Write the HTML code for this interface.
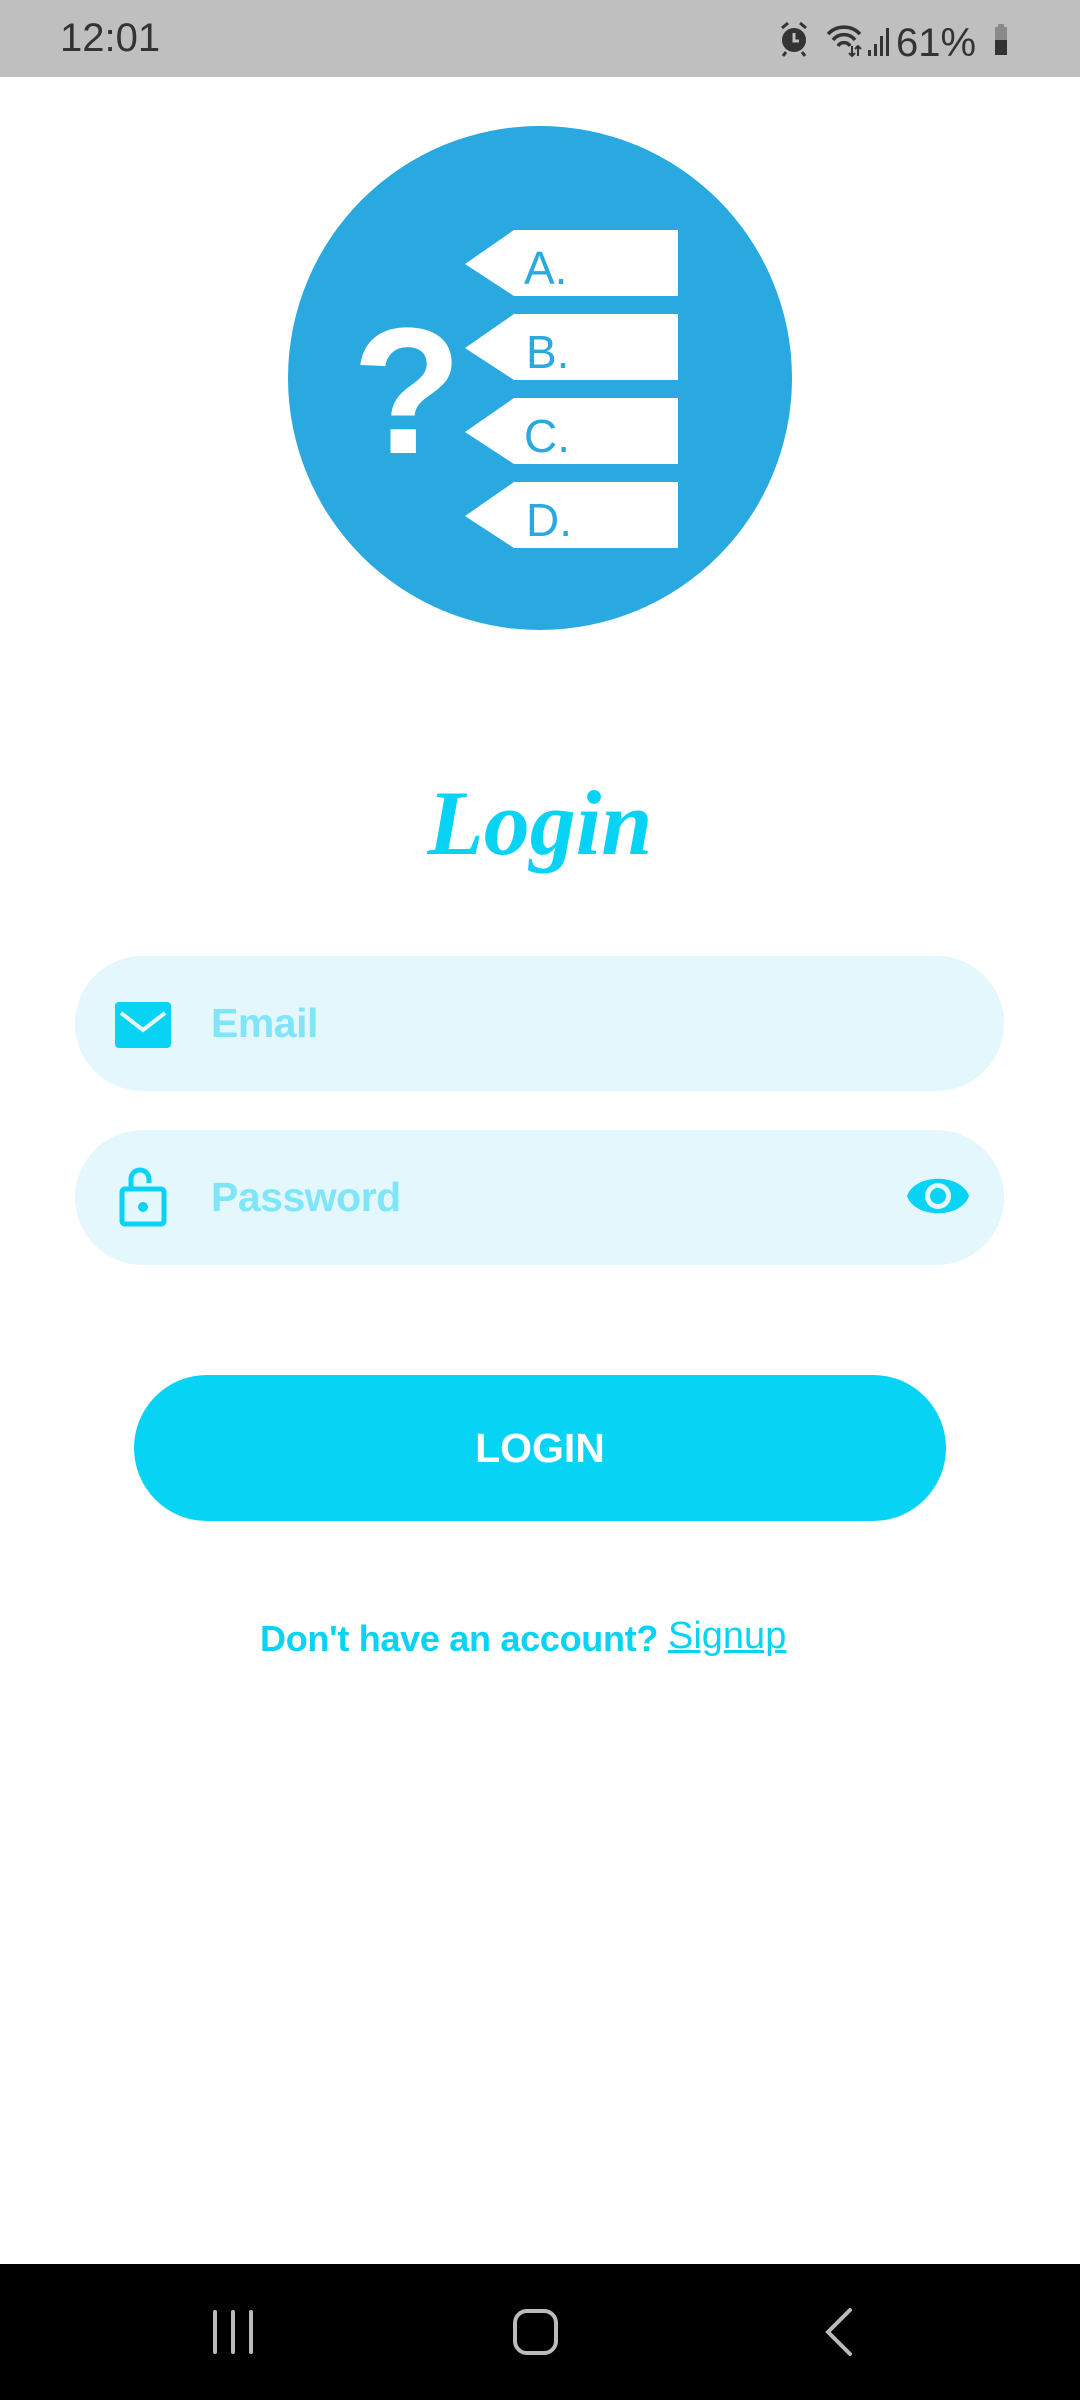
<!DOCTYPE html>
<html><head><meta charset="utf-8"><style>
*{margin:0;padding:0;box-sizing:border-box}
body{width:1080px;height:2400px;background:#fff;position:relative;overflow:hidden;font-family:"Liberation Sans",sans-serif}
.abs{position:absolute}
.sb{left:0;top:0;width:1080px;height:77px;background:#bfbfbf}
.field{left:75px;width:929px;height:135px;border-radius:68px;background:#e3f7fc}
.ph{font-size:41px;font-weight:bold;color:#7ee6f8;left:136px;letter-spacing:-0.5px}
</style></head><body>
<div class="abs sb">
  <div class="abs" style="left:60px;top:16px;font-size:40px;color:#333">12:01</div>
  <svg class="abs" style="left:778px;top:20px" width="260" height="40" viewBox="0 0 260 40">
    <circle cx="16" cy="20" r="12" fill="#333"/><path d="M16 13v8h5" stroke="#bfbfbf" stroke-width="3" fill="none"/>
    <path d="M4 8l6-5M28 8l-6-5M8 32l-3 4M24 32l3 4" stroke="#333" stroke-width="3"/>
    <path d="M50 14a22 22 0 0 1 32 0M55 20a14 14 0 0 1 22 0M60 26a7 7 0 0 1 12 0" stroke="#333" stroke-width="3.5" fill="none"/>
    <path d="M74 26v10M71 33l3 3 3-3M80 36v-10M77 29l3-3 3 3" stroke="#333" stroke-width="2" fill="none"/>
    <rect x="90" y="30" width="3" height="6" fill="#333"/><rect x="96" y="24" width="3" height="12" fill="#333"/><rect x="102" y="16" width="3" height="20" fill="#333"/><rect x="108" y="8" width="3" height="28" fill="#333"/>
    <text x="118" y="36" font-size="40" fill="#333" font-family="Liberation Sans">61%</text>
    <rect x="220" y="4" width="6" height="4" fill="#8a8a8a"/><rect x="217" y="7" width="12" height="13" fill="#8a8a8a"/><rect x="217" y="20" width="12" height="15" fill="#333"/>
  </svg>
</div>
<svg class="abs" style="left:288px;top:126px" width="504" height="504" viewBox="0 0 504 504">
  <circle cx="252" cy="252" r="252" fill="#2aa9e0"/>
  <g fill="#fff">
    <path d="M226 104h164v66h-164l-49-32z"/>
    <path d="M226 188h164v66h-164l-49-32z"/>
    <path d="M226 272h164v66h-164l-49-32z"/>
    <path d="M226 356h164v66h-164l-49-32z"/>
  </g>
  <text x="119" y="327" font-size="180" font-weight="bold" fill="#fff" font-family="Liberation Sans" text-anchor="middle">?</text>
  <g fill="#2aa9e0" font-family="Liberation Sans" font-size="46">
    <text x="236" y="158">A.</text><text x="238" y="242">B.</text><text x="236" y="326">C.</text><text x="238" y="410">D.</text>
  </g>
</svg>
<div class="abs" style="left:0;width:1080px;top:770px;text-align:center;font-family:'Liberation Serif',serif;font-style:italic;font-weight:bold;font-size:92px;color:#08d3f4">Login</div>
<div class="abs field" style="top:956px"></div>
<svg class="abs" style="left:115px;top:1002px" width="56" height="46" viewBox="0 0 56 46"><rect width="56" height="46" rx="4" fill="#08d3f4"/><path d="M6 11l22 17 22-17" stroke="#e3f7fc" stroke-width="4" fill="none"/></svg>
<div class="abs ph" style="left:211px;top:1000px">Email</div>
<div class="abs field" style="top:1130px"></div>
<svg class="abs" style="left:119px;top:1163px" width="48" height="64" viewBox="0 0 48 64"><path d="M12 28V16a9 9 0 0 1 18 0v4" stroke="#08d3f4" stroke-width="5" fill="none"/><rect x="3" y="26" width="42" height="35" rx="3" stroke="#08d3f4" stroke-width="5" fill="none"/><circle cx="24" cy="44" r="5" fill="#08d3f4"/></svg>
<div class="abs ph" style="left:211px;top:1174px">Password</div>
<svg class="abs" style="left:905px;top:1173px" width="66" height="46" viewBox="0 0 66 46"><path d="M2 23C10 0 56 0 64 23C56 46 10 46 2 23z" fill="#08d3f4"/><circle cx="33" cy="23" r="13" fill="#e3f7fc"/><circle cx="33" cy="23" r="8" fill="#08d3f4"/></svg>
<div class="abs" style="left:134px;top:1375px;width:812px;height:146px;border-radius:73px;background:#07d3f4;color:#fff;font-weight:bold;font-size:41px;text-align:center;line-height:146px">LOGIN</div>
<div class="abs" style="left:260px;top:1618px;font-size:36px;font-weight:bold;color:#08d3f4;letter-spacing:-0.3px">Don't have an account?</div>
<div class="abs" style="left:668px;top:1615px;font-size:38px;color:#08d3f4;text-decoration:underline">Signup</div>
<div class="abs" style="left:0;top:2264px;width:1080px;height:136px;background:#000"></div>
<svg class="abs" style="left:0;top:2264px" width="1080" height="136"><g stroke="#bbb" stroke-width="4" fill="none" stroke-linecap="round"><path d="M215 48v40M233 48v40M251 48v40"/><rect x="515" y="47" width="41" height="42" rx="12"/><path d="M850 46l-22 22 22 22"/></g></svg>
</body></html>
